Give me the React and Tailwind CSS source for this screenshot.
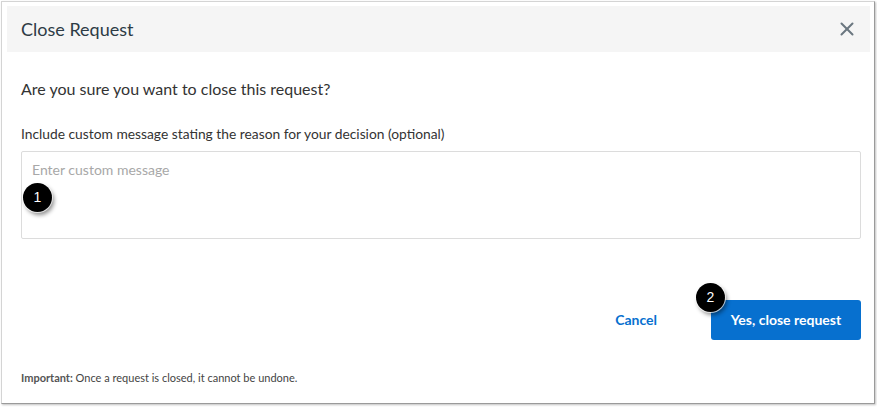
import { X } from "lucide-react";

function Badge({ n }) {
  return (
    <span className="absolute flex h-[29px] w-[29px] items-center justify-center rounded-full bg-black text-[14px] text-white shadow-[2px_3px_4px_rgba(0,0,0,0.45)] ring-1 ring-white/70" style={{ fontFamily: "'Liberation Sans', Arial, sans-serif" }}>
      {n}
    </span>
  );
}

export default function App() {
  return (
    <div className="h-[407px] w-[877px] bg-white" style={{ fontFamily: "Lato, 'Open Sans', sans-serif" }}>
      <div className="ml-[1px] mt-[1px] h-[403px] w-[874px] border border-[#d4d4d4] border-r-[#9a9a9a] border-b-[#9a9a9a] bg-white shadow-[1px_1px_2px_rgba(0,0,0,0.25)] pl-[5px] pr-[4px] pt-[4px]">
        {/* header */}
        <div className="flex h-[46px] items-center justify-between bg-[#f5f5f5] pl-[14px] pr-[12px]">
          <h2 className="text-[18px] text-[#2d3b45]">Close Request</h2>
          <X className="h-[22px] w-[22px] text-[#6b7780]" strokeWidth={2.2} />
        </div>

        <div className="pl-[14px] pr-[9px]">
          <p className="mt-[25px] text-[16px] text-[#333]">Are you sure you want to close this request?</p>
          <p className="mt-[23px] text-[13.8px] text-[#333]">Include custom message stating the reason for your decision (optional)</p>

          <div className="relative mt-[6px] h-[88px] w-full rounded-[2px] border border-[#dcdcdc] px-[10px] py-[7px] leading-[20px]">
            <span className="text-[14px] text-[#a8a8a8]">Enter custom message</span>
            <div className="absolute left-[1px] top-[31px]">
              <Badge n="1" />
            </div>
          </div>

          <div className="mt-[61px] flex items-center justify-end gap-[54px]">
            <span className="text-[14px] font-bold text-[#0770cf]">Cancel</span>
            <div className="relative">
              <button className="h-[40px] w-[150px] rounded-[3px] bg-[#0770cf] text-[14px] font-bold text-white">Yes, close request</button>
              <div className="absolute left-[-15px] top-[-17px]">
                <Badge n="2" />
              </div>
            </div>
          </div>

          <p className="mt-[30px] text-[11px] text-[#444]">
            <span className="font-bold text-[#555]">Important:</span> Once a request is closed, it cannot be undone.
          </p>
        </div>
      </div>
    </div>
  );
}
